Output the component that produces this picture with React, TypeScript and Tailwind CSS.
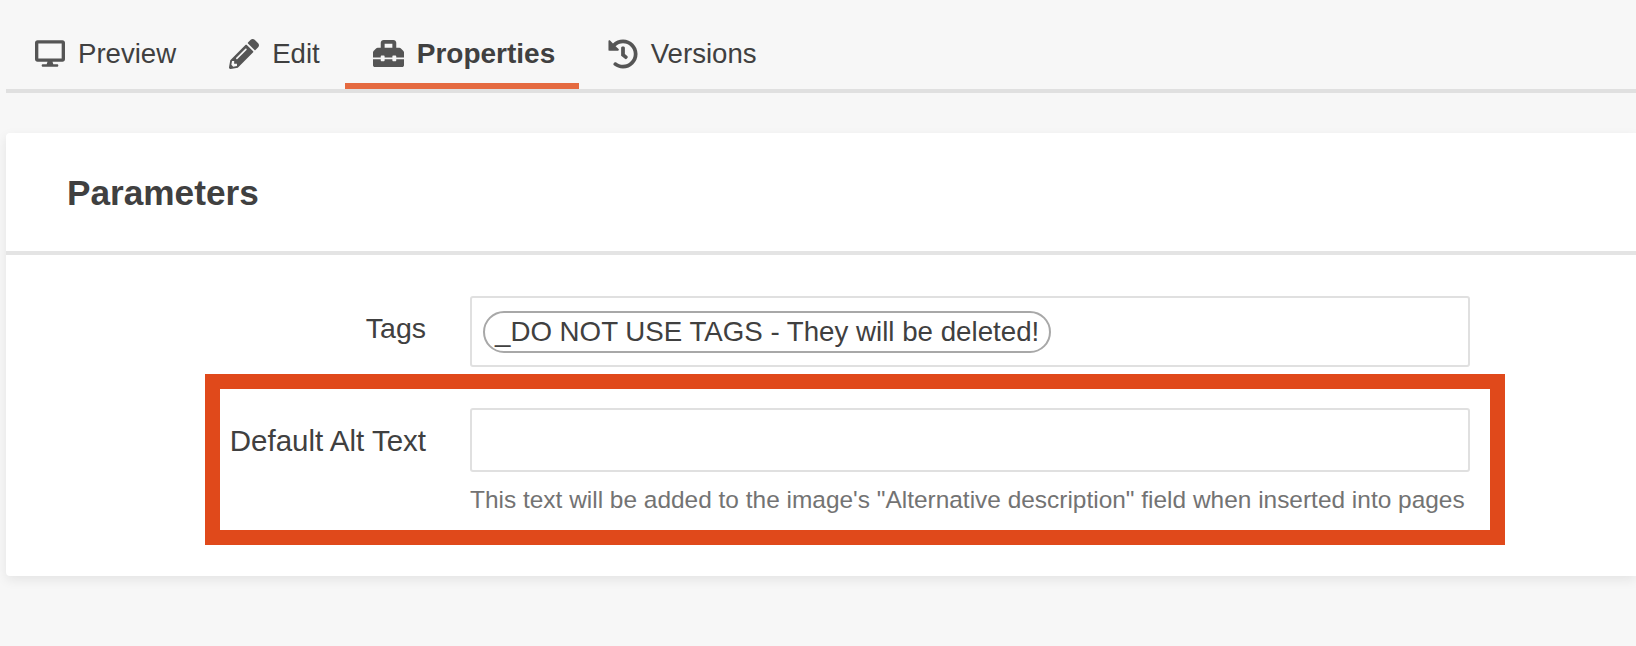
import { FaDesktop, FaPencilAlt, FaToolbox, FaHistory } from "react-icons/fa";

const App = () => {
    return (
        <div className="min-h-[646px] bg-[#f7f7f7] font-['Liberation_Sans',Arial,sans-serif] text-[#404040] overflow-hidden">
            {/* onglets */}
            <div className="h-[93px] ml-[6px] pt-[32px] border-b-[4px] border-[#e0e0e0] flex">
                <div className="flex items-center gap-[13px] h-[57px] pb-[8px] pl-[29px] pr-[16px] border-b-[6px] border-transparent">
                    <FaDesktop className="w-[30px] h-[27px] text-[#555]" />
                    <span className="text-[27.6px]">Preview</span>
                </div>
                <div className="flex items-center gap-[13px] h-[57px] pb-[8px] pl-[37px] pr-[25px] border-b-[6px] border-transparent">
                    <FaPencilAlt className="w-[30px] h-[30px] text-[#555]" />
                    <span className="text-[27.6px]">Edit</span>
                </div>
                <div className="flex items-center gap-[13px] h-[57px] pb-[8px] w-[234px] pl-[28px] border-b-[6px] border-[#e56a40]">
                    <FaToolbox className="w-[31px] h-[31px] text-[#555]" />
                    <span className="text-[28px] font-bold">Properties</span>
                </div>
                <div className="flex items-center gap-[13px] h-[57px] pb-[8px] pl-[29px] border-b-[6px] border-transparent">
                    <FaHistory className="w-[30px] h-[30px] text-[#555]" />
                    <span className="text-[27.6px]">Versions</span>
                </div>
            </div>

            {/* carte */}
            <div className="mt-[40px] ml-[6px] bg-white rounded-l-[4px] shadow-[0_4px_12px_rgba(0,0,0,0.08)]">
                <div className="h-[122px] pl-[61px] pt-[2px] flex items-center border-b-[4px] border-[#e4e4e4]">
                    <h2 className="text-[35.2px] font-bold">Parameters</h2>
                </div>
                <div className="pt-[41px] pb-[31px]">
                    <div className="flex items-start">
                        <div className="w-[420px] text-right text-[28.5px] pt-[11px]">Tags</div>
                        <div className="ml-[44px] w-[1000px] h-[71px] border-2 border-[#e0e0e0] rounded-[3px] flex items-center pl-[11px]">
                            <span className="h-[42px] flex items-center px-[10px] pt-[1px] border-2 border-[#a8a8a8] rounded-full text-[27.7px] text-[#404040]">_DO NOT USE TAGS - They will be deleted!</span>
                        </div>
                    </div>
                    <div className="mt-[7px] ml-[199px] w-[1300px] h-[171px] border-[15px] border-[#e0491b] flex items-start">
                        <div className="w-[206px] text-right text-[29.5px] pt-[30px] whitespace-nowrap">Default Alt Text</div>
                        <div className="ml-[44px] w-[1000px] pt-[19px]">
                            <div className="h-[64px] border-2 border-[#e0e0e0] rounded-[3px]"></div>
                            <p className="mt-[10px] text-[24.45px] text-[#737373] whitespace-nowrap">This text will be added to the image's "Alternative description" field when inserted into pages</p>
                        </div>
                    </div>
                </div>
            </div>
        </div>
    );
};

export default App;
